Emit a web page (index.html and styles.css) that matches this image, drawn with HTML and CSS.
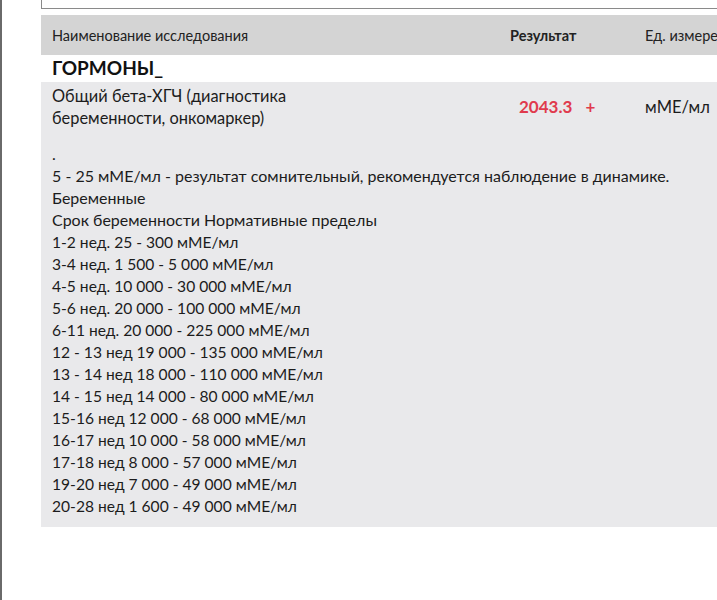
FILE: index.html
```html
<!DOCTYPE html>
<html lang="ru">
<head>
<meta charset="utf-8">
<link rel="stylesheet" href="styles.css">
</head>
<body>
<div class="page">
  <div class="sheet">
    <div class="lab-box">лабораторных</div>
    <div class="head">
      <div class="c-name">Наименование исследования</div>
      <div class="c-res">Результат</div>
      <div class="c-unit">Ед. измерения</div>
    </div>
    <div class="group">ГОРМОНЫ_</div>
    <div class="test">
      <div class="test-row">
        <div class="c-name">Общий бета-ХГЧ (диагностика<br>беременности, онкомаркер)</div>
        <div class="c-res result">2043.3 <span class="flag">+</span></div>
        <div class="c-unit">мМЕ/мл</div>
      </div>
      <div class="notes">
        <div>.</div>
        <div>5 - 25 мМЕ/мл - результат сомнительный, рекомендуется наблюдение в динамике.</div>
        <div>Беременные</div>
        <div>Срок беременности Нормативные пределы</div>
        <div class="num">1-2 нед. 25 - 300 мМЕ/мл</div>
        <div class="num">3-4 нед. 1 500 - 5 000 мМЕ/мл</div>
        <div class="num">4-5 нед. 10 000 - 30 000 мМЕ/мл</div>
        <div class="num">5-6 нед. 20 000 - 100 000 мМЕ/мл</div>
        <div class="num">6-11 нед. 20 000 - 225 000 мМЕ/мл</div>
        <div class="num">12 - 13 нед 19 000 - 135 000 мМЕ/мл</div>
        <div class="num">13 - 14 нед 18 000 - 110 000 мМЕ/мл</div>
        <div class="num">14 - 15 нед 14 000 - 80 000 мМЕ/мл</div>
        <div class="num">15-16 нед 12 000 - 68 000 мМЕ/мл</div>
        <div class="num">16-17 нед 10 000 - 58 000 мМЕ/мл</div>
        <div class="num">17-18 нед 8 000 - 57 000 мМЕ/мл</div>
        <div class="num">19-20 нед 7 000 - 49 000 мМЕ/мл</div>
        <div class="num">20-28 нед 1 600 - 49 000 мМЕ/мл</div>
      </div>
    </div>
  </div>
</div>
</body>
</html>
```
FILE: styles.css
```css
html, body {
  margin: 0;
  padding: 0;
  background: #fff;
  overflow: hidden;
}
.page {
  width: 717px;
  height: 600px;
  box-sizing: border-box;
  border-left: 2px solid #6a6a6a;
  padding-left: 39px;
  overflow: hidden;
  font-family: Lato, "Noto Sans", sans-serif;
  color: #1c1c1c;
}
.sheet {
  width: 720px;
}
.lab-box {
  margin-top: -16px;
  height: 25px;
  border: 1px solid #8a8a8a;
  border-top: none;
  box-sizing: border-box;
  font-size: 11px;
  line-height: 14px;
  padding-left: 6px;
  color: #333;
  margin-bottom: 6px;
}
.head {
  display: flex;
  align-items: center;
  height: 40px;
  background: #d4d4d4;
  font-size: 14.5px;
  color: #222;
}
.c-name {
  width: 469px;
  padding-left: 11px;
  box-sizing: border-box;
}
.c-res {
  width: 135px;
}
.head .c-res {
  font-weight: 700;
}
.c-unit {
  white-space: nowrap;
}
.group {
  height: 27px;
  padding-left: 11px;
  font-size: 19px;
  font-weight: 700;
  line-height: 25px;
  color: #111;
}
.test {
  background: #e9e9eb;
  padding-top: 3px;
  padding-bottom: 10px;
  font-size: 16px;
  line-height: 22px;
}
.test-row {
  display: flex;
  align-items: center;
}
.test-row .c-name {
  font-size: 16.4px;
}
.test-row .c-unit {
  font-size: 16.5px;
}
.result {
  color: #e03a4d;
  font-size: 17px;
  font-weight: 700;
  padding-left: 9px;
  box-sizing: border-box;
}
.flag {
  margin-left: 9px;
}
.notes {
  margin-top: 14px;
  padding-left: 11px;
}
.num {
  font-size: 15.6px;
}
```
